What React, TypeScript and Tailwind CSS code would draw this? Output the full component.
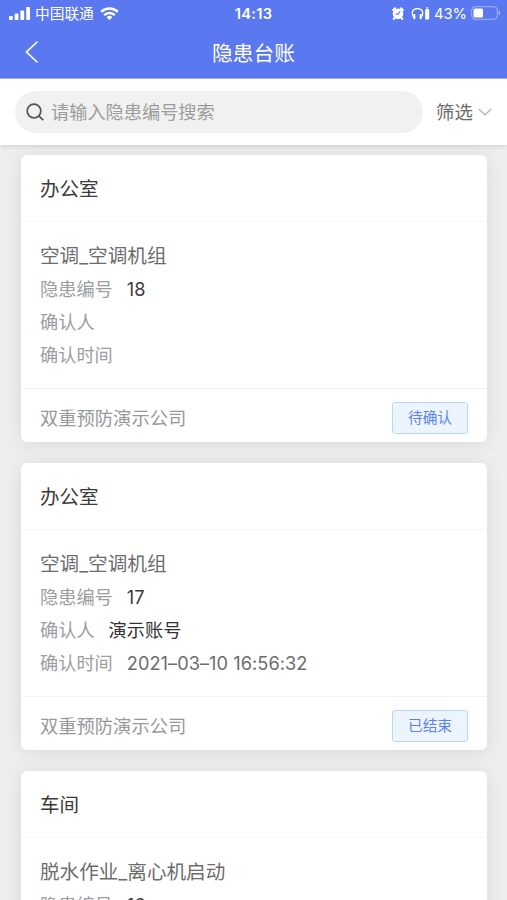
import React from 'react';
import clsx from 'clsx';

type HazardRow = {
  label: string;
  value?: string;
  valueClass?: string;
};

type Hazard = {
  id: number;
  place: string;
  title: string;
  rows: HazardRow[];
  company: string;
  status: string;
};

const HAZARDS: Hazard[] = [
  {
    id: 18,
    place: '办公室',
    title: '空调_空调机组',
    rows: [
      { label: '隐患编号', value: '18', valueClass: 'text-[#3c3c3c]' },
      { label: '确认人' },
      { label: '确认时间' },
    ],
    company: '双重预防演示公司',
    status: '待确认',
  },
  {
    id: 17,
    place: '办公室',
    title: '空调_空调机组',
    rows: [
      { label: '隐患编号', value: '17', valueClass: 'text-[#3c3c3c]' },
      { label: '确认人', value: '演示账号', valueClass: 'text-[#333333]' },
      { label: '确认时间', value: '2021–03–10 16:56:32', valueClass: 'text-[#6c6c6c] tracking-[0.05px]' },
    ],
    company: '双重预防演示公司',
    status: '已结束',
  },
  {
    id: 16,
    place: '车间',
    title: '脱水作业_离心机启动',
    rows: [
      { label: '隐患编号', value: '16', valueClass: 'text-[#3c3c3c]' },
      { label: '确认人' },
      { label: '确认时间' },
    ],
    company: '双重预防演示公司',
    status: '待确认',
  },
];

function StatusBar() {
  return (
    <div className="grid h-[27px] grid-cols-3 items-center pl-[9px] pr-[6px] text-[14.7px] leading-none">
      <div className="flex items-center">
        <svg className="h-[13px] w-[22px]" viewBox="0 0 22 13" fill="currentColor">
          <rect x="0" y="9" width="3.8" height="4" rx="1" />
          <rect x="5.7" y="6.5" width="3.8" height="6.5" rx="1" />
          <rect x="11.4" y="3.5" width="3.8" height="9.5" rx="1" />
          <rect x="17.2" y="0" width="3.8" height="13" rx="1" />
        </svg>
        <span className="ml-1 whitespace-nowrap pt-[2px]">中国联通</span>
        <svg className="ml-[6px] h-[13px] w-[19px]" viewBox="0 0 19 13" fill="none" stroke="currentColor" strokeWidth="2.5">
          <path d="M1.2 4.9a11.8 11.8 0 0 1 16.6 0" />
          <path d="M4.2 8.2a7.5 7.5 0 0 1 10.6 0" />
          <path d="M9.5 13 6.6 10.3a4.1 4.1 0 0 1 5.8 0Z" fill="currentColor" stroke="none" />
        </svg>
      </div>
      <span className="-ml-[3px] pt-[2px] text-center font-semibold tracking-[0.3px]">14:13</span>
      <div className="flex items-center justify-end">
        <svg className="h-[13px] w-3" viewBox="0 0 12 13">
          <circle cx="6" cy="6.8" r="5.3" fill="currentColor" />
          <path d="M1.2 3 3 1.3M10.8 3 9 1.3M2.5 11l-.8 1M9.5 11l.8 1" stroke="currentColor" strokeWidth="2" strokeLinecap="round" />
          <path d="M8.2 4.3 6 7.2H3.7" fill="none" stroke="#5a78f0" strokeWidth="1.2" />
        </svg>
        <svg className="ml-[7px] h-[13px] w-[19px]" viewBox="0 0 19 13" fill="none" stroke="currentColor">
          <path d="M2.5 10C-.3 4.500 2.300 1.500 6.500 1.500s6.800 3 4 8.500" strokeWidth="1.300" />
          <path d="M3.300 8v3.200M9.700 8v3.200" strokeWidth="2.200" strokeLinecap="round" />
          <rect x="14.200" y="2" width="4" height="10.500" rx="1" fill="currentColor" stroke="none" />
          <path d="M15.200.9h2" strokeWidth="1.200" />
        </svg>
        <span className="ml-[4px] pt-px">43%</span>
        <svg className="ml-[4px] h-[14px] w-[30px]" viewBox="0 0 30 14">
          <rect x=".7" y=".7" width="25.600" height="12.600" rx="3.500" fill="none" stroke="currentColor" strokeOpacity=".45" />
          <rect x="2.500" y="2.500" width="9.500" height="9" rx="1.500" fill="currentColor" />
          <path d="M27.600 4.800c1.900.5 1.900 3.900 0 4.400Z" fill="currentColor" fillOpacity=".5" />
        </svg>
      </div>
    </div>
  );
}

function HazardCard({ hazard }: { hazard: Hazard }) {
  return (
    <section className="rounded-[6px] bg-white shadow-[0_2px_18px_rgba(0,0,0,0.09)]">
      <h2 className="flex h-[67px] items-center border-b border-[#f6f6f6] px-[19px] pt-[3px] text-[19.5px] text-[#3a3a3a]">
        {hazard.place}
      </h2>
      <div className="h-[166px] px-[19px] pt-[18px] text-[18.2px] leading-[33px]">
        <p className="text-[19.6px] text-[#6c6c6c]">{hazard.title}</p>
        {hazard.rows.map((row) => (
          <div key={row.label} className="flex gap-[14px]">
            <span className="text-[#9c9ea1]">{row.label}</span>
            {row.value && <span className={clsx('whitespace-nowrap', row.valueClass)}>{row.value}</span>}
          </div>
        ))}
      </div>
      <footer className="flex h-[54px] items-center justify-between border-t border-[#f3f3f3] px-[19px] pt-[4px]">
        <span className="pt-[2px] text-[18.3px] text-[#96989b]">{hazard.company}</span>
        <button
          type="button"
          className="h-8 w-[76px] rounded-[3px] border border-[#b3d8ff] bg-[#ecf4ff] pt-px text-[14.7px] text-[#5c82ee]"
        >
          {hazard.status}
        </button>
      </footer>
    </section>
  );
}

export default function App() {
  return (
    <div className="flex h-[900px] w-[507px] flex-col overflow-hidden bg-[#eeeeee] font-['Inter','Noto_Sans_CJK_SC',sans-serif]">
      <header className="h-[79px] shrink-0 border-b border-[#a9b7f6] bg-[#5a78f0] text-white">
        <StatusBar />
        <div className="relative flex h-[51px] items-center justify-center">
          <button type="button" className="absolute left-[25px] top-[13px]">
            <svg className="h-6 w-[14px]" viewBox="0 0 14 24" fill="none" stroke="currentColor" strokeWidth="1.7">
              <path d="M12.5 1.500 1.500 12l11 10.500" />
            </svg>
          </button>
          <h1 className="pt-[3px] text-[20.7px]">隐患台账</h1>
        </div>
      </header>

      <div className="z-10 flex h-[66px] shrink-0 items-center bg-white pl-[15px] pr-[14px] shadow-[0_1px_5px_rgba(0,0,0,0.15)]">
        <div className="flex h-[42px] w-[408px] items-center rounded-full bg-[#f1f1f1] pl-[11px]">
          <svg className="h-[18px] w-[18px] text-[#555555]" viewBox="0 0 18 18" fill="none" stroke="currentColor" strokeWidth="1.7">
            <circle cx="8" cy="8" r="6.8" />
            <path d="m12.8 12.8 4.4 4.4" />
          </svg>
          <span className="ml-[7px] pt-[2px] text-[18.2px] text-[#9c9c9c]">请输入隐患编号搜索</span>
        </div>
        <button type="button" className="ml-[13px] flex items-center text-[18.4px] text-[#6c6c6c]">
          <span className="pt-[2px]">筛选</span>
          <svg className="ml-[5px] h-[8px] w-[14px] text-[#b8b8b8]" viewBox="0 0 14 8" fill="none" stroke="currentColor" strokeWidth="1.5">
            <path d="m.7 1 6.300 5.700L13.300 1" />
          </svg>
        </button>
      </div>

      <main className="flex flex-col gap-[21px] pl-[21px] pr-5 pt-[10px]">
        {HAZARDS.map((hazard) => (
          <HazardCard key={hazard.id} hazard={hazard} />
        ))}
      </main>
    </div>
  );
}
